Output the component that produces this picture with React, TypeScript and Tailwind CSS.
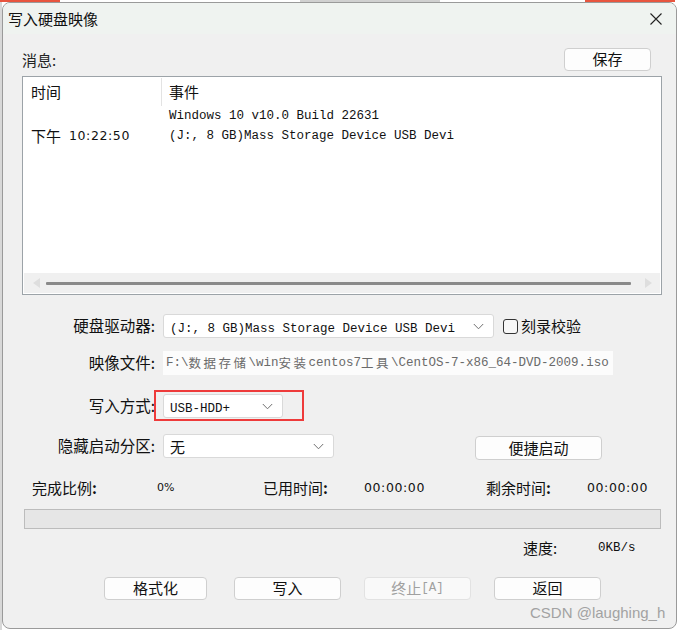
import React from "react";

const cjk = '"Noto Sans CJK SC", "Microsoft YaHei", sans-serif';
const mono = '"Liberation Mono", "Noto Sans CJK SC", monospace';

function Chevron() {
  return (
    <svg width="11" height="7" viewBox="0 0 11 7" className="shrink-0">
      <path d="M0.8 1 L5.5 5.8 L10.2 1" fill="none" stroke="#707070" strokeWidth="1" />
    </svg>
  );
}

function Select({ w, children }: { w: string; children: React.ReactNode }) {
  return (
    <div className={`${w} h-[24px] bg-white border border-[#d9d9d9] rounded-[3px] flex items-center pl-[6px] pr-[9px] justify-between`}>
      <div className="whitespace-nowrap overflow-hidden">{children}</div>
      <Chevron />
    </div>
  );
}

function Btn({ w, children, disabled }: { w: string; children: React.ReactNode; disabled?: boolean }) {
  return (
    <div
      className={`${w} h-[23px] rounded-[4px] border flex items-center justify-center text-[15px] ${
        disabled ? "border-[#e2e2e2] bg-[#f9f9f9] text-[#a0a0a0]" : "border-[#cfcfcf] bg-[#fdfdfd] text-[#111]"
      }`}
      style={{ fontFamily: cjk }}
    >
      {children}
    </div>
  );
}

const C = ({ children }: { children: React.ReactNode }) => (
  <span className="tracking-[2.5px]" style={{ fontFamily: '"Noto Sans CJK SC", sans-serif' }}>{children}</span>
);

const num = { fontFamily: '"DejaVu Sans", sans-serif' };

export default function App() {
  return (
    <div className="w-[681px] h-[630px] bg-white overflow-hidden relative" style={{ fontFamily: cjk }}>
      <div className="absolute left-0 top-0 w-[2px] h-[630px] bg-[#d8d8d8]" />
      <div className="absolute left-[300px] top-0 w-[140px] h-[2px] bg-[#d0d0d0]" />
      <div className="absolute left-[0px] top-0 w-[60px] h-[2px] bg-[#e8553f]" />
      <div className="absolute left-[585px] top-0 w-[90px] h-[2px] bg-[#e8553f]" />
      <div className="ml-[2px] mt-[2px] w-[675px] h-[627px] border border-[#9a9a9a] rounded-[8px] overflow-hidden bg-[#f0f0f0] flex flex-col">
        {/* Title bar */}
        <div className="h-[31px] bg-[#eff3f0] flex items-center justify-between pl-[5px] pr-[14px] shrink-0">
          <span className="text-[15px] text-[#111] leading-none">写入硬盘映像</span>
          <svg width="12" height="12" viewBox="0 0 12 12">
            <path d="M0.5 0.5 L11.5 11.5 M11.5 0.5 L0.5 11.5" stroke="#222" strokeWidth="1.1" />
          </svg>
        </div>

        <div className="pl-[19px] pr-[14px] flex flex-col">
          {/* 消息 row */}
          <div className="mt-[14px] h-[22px] flex items-center justify-between">
            <span className="text-[15px] text-[#222] pt-[2px]">消息:</span>
            <div className="mr-[11px]">
              <Btn w="w-[87px]">保存</Btn>
            </div>
          </div>

          {/* List */}
          <div className="mt-[6px] h-[219px] border border-[#9ca3a8] bg-white flex flex-col">
            <div className="h-[28px] flex items-center shrink-0 mt-[1px]">
              <div className="w-[138px] pl-[8px] text-[15px] text-[#111] h-full flex items-center">时间</div>
              <div className="w-[1px] h-full bg-[#e3e3e3]" />
              <div className="pl-[7px] text-[15px] text-[#111]">事件</div>
            </div>
            <div className="flex flex-col text-[12.5px] text-[#111]">
              <div className="h-[20px] flex items-center">
                <div className="w-[139px]" />
                <div className="pl-[7px] whitespace-nowrap" style={{ fontFamily: mono }}>Windows 10 v10.0 Build 22631</div>
              </div>
              <div className="h-[20px] flex items-center">
                <div className="w-[139px] pl-[8px] whitespace-nowrap flex items-center">
                  <span className="text-[15px]">下午</span>
                  <span className="ml-[8px] text-[12.5px] tracking-[0.6px]" style={num}>10:22:50</span>
                </div>
                <div className="pl-[7px] whitespace-nowrap" style={{ fontFamily: mono }}>(J:, 8 GB)Mass Storage Device USB Devi</div>
              </div>
            </div>
            <div className="flex-1" />
            <div className="h-[20px] bg-[#f0f0f0] flex items-center mb-[1px] mx-[1px]">
              <svg width="8" height="10" viewBox="0 0 8 10" className="ml-[9px]">
                <path d="M7 0 L0 5 L7 10 Z" fill="#dedede" />
              </svg>
              <div className="ml-[5px] flex-1 h-[3px] bg-[#8a8a8a] rounded-[1px]" />
              <svg width="8" height="10" viewBox="0 0 8 10" className="ml-[13px] mr-[8px]">
                <path d="M1 0 L8 5 L1 10 Z" fill="#dedede" />
              </svg>
            </div>
          </div>

          {/* Form */}
          <div className="mt-[19px] flex items-center h-[24px]">
            <div className="w-[135px] text-right text-[15.5px] text-[#111] pr-[2px] whitespace-nowrap">硬盘驱动器:</div>
            <div className="ml-[6px]">
              <Select w="w-[331px]">
                <span className="text-[12.5px] text-[#111]" style={{ fontFamily: mono }}>(J:, 8 GB)Mass Storage Device USB Devi</span>
              </Select>
            </div>
            <div className="ml-[9px] w-[15px] h-[15px] border border-[#333] rounded-[3px] bg-[#f7f7f7]" />
            <span className="ml-[3px] text-[15px] text-[#111]">刻录校验</span>
          </div>

          <div className="mt-[13px] flex items-center h-[24px]">
            <div className="w-[135px] text-right text-[15.5px] text-[#111] pr-[2px] whitespace-nowrap">映像文件:</div>
            <div className="ml-[6px] w-[450px] h-[24px] bg-[#fcfcfc] flex items-center pl-[3px] whitespace-nowrap text-[12.5px] text-[#6a6a6a]" style={{ fontFamily: mono }}>
              F:\<C>数据存储</C>\win<C>安装</C>centos7<C>工具</C>\CentOS-7-x86_64-DVD-2009.iso
            </div>
          </div>

          <div className="mt-[19px] flex items-center h-[24px]">
            <div className="w-[135px] text-right text-[15.5px] text-[#111] pr-[2px] whitespace-nowrap">写入方式:</div>
            <div className="ml-[6px] relative">
              <Select w="w-[120px]">
                <span className="text-[12.5px] text-[#111]" style={{ fontFamily: mono }}>USB-HDD+</span>
              </Select>
              <div className="absolute left-[-9px] top-[-4px] w-[150px] h-[31px] border-2 border-[#ee3b3b]" />
            </div>
          </div>

          <div className="mt-[16px] flex items-center h-[24px]">
            <div className="w-[135px] text-right text-[15.5px] text-[#111] pr-[2px] whitespace-nowrap">隐藏启动分区:</div>
            <div className="ml-[6px]">
              <Select w="w-[171px]">
                <span className="text-[15px] text-[#111]">无</span>
              </Select>
            </div>
            <div className="ml-[141px] mt-[4px]">
              <div className="w-[127px] h-[24px] rounded-[4px] border border-[#cfcfcf] bg-[#fdfdfd] flex items-center justify-center text-[15px] text-[#111]">便捷启动</div>
            </div>
          </div>

          {/* Status */}
          <div className="mt-[20px] h-[20px] flex items-center text-[15px] text-[#111] whitespace-nowrap">
            <span className="ml-[10px] w-[125px]">完成比例<b>:</b></span>
            <span className="w-[106px] text-[11px]" style={num}>0%</span>
            <span className="w-[101px]">已用时间<b>:</b></span>
            <span className="w-[122px] text-[12.5px] tracking-[0.6px]" style={num}>00:00:00</span>
            <span className="w-[101px]">剩余时间<b>:</b></span>
            <span className="text-[12.5px] tracking-[0.6px]" style={num}>00:00:00</span>
          </div>

          <div className="mt-[11px] ml-[2px] w-[637px] h-[20px] bg-[#e6e6e6] border border-[#bcbcbc]" />

          <div className="mt-[11px] h-[16px] flex items-center text-[15px] text-[#111] whitespace-nowrap">
            <span className="ml-[501px] w-[75px]">速度:</span>
            <span className="text-[12.5px]" style={{ fontFamily: mono }}>0KB/s</span>
          </div>

          <div className="mt-[21px] flex items-center">
            <div className="ml-[82px]"><Btn w="w-[103px]">格式化</Btn></div>
            <div className="ml-[27px]"><Btn w="w-[107px]">写入</Btn></div>
            <div className="ml-[23px]"><Btn w="w-[107px]" disabled><span>终止</span><span style={{ fontFamily: mono }} className="text-[12.5px]">[A]</span></Btn></div>
            <div className="ml-[23px]"><Btn w="w-[107px]">返回</Btn></div>
          </div>
        </div>
      </div>
      <div className="absolute left-[530px] top-[602px] text-[15px] text-[#a2a2a2] whitespace-nowrap" style={{ fontFamily: '"Liberation Sans", Arial, sans-serif' }}>
        CSDN @laughing_h
      </div>
    </div>
  );
}
